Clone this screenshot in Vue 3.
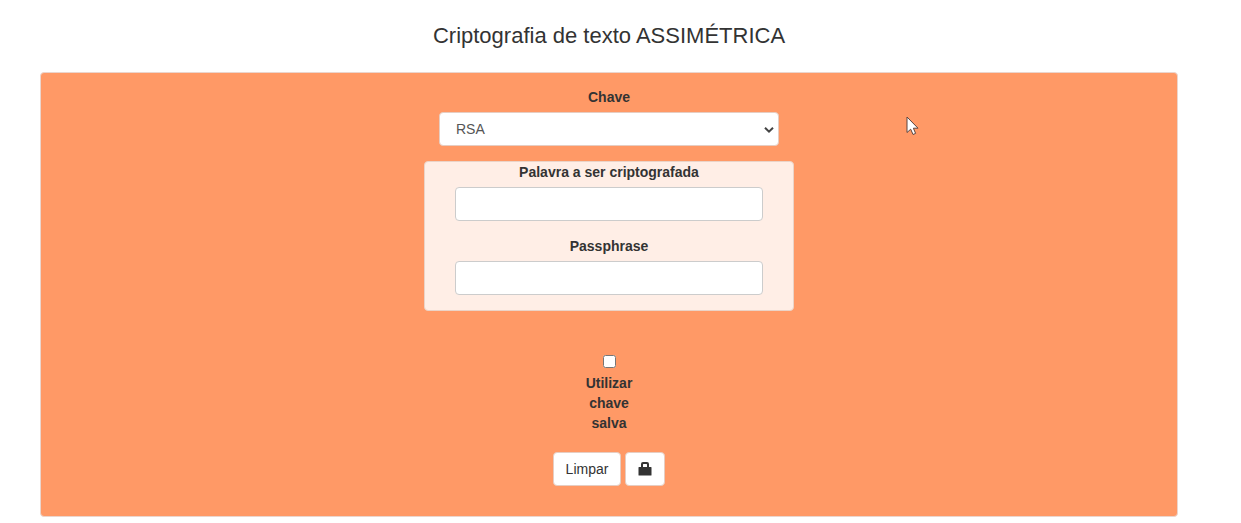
<script setup>
import { ref } from 'vue'

const keyType = ref('RSA')
const word = ref('')
const passphrase = ref('')
const useSaved = ref(false)

function clearForm() {
  word.value = ''
  passphrase.value = ''
  useSaved.value = false
}
</script>

<template>
  <main class="page">
    <h1 class="title">Criptografia de texto ASSIMÉTRICA</h1>
    <form class="panel" @submit.prevent>
      <div class="group key-group">
        <label for="key">Chave</label>
        <div class="select-wrap">
          <select id="key" v-model="keyType" class="control">
            <option>RSA</option>
          </select>
          <svg class="chevron" viewBox="0 0 10 8" aria-hidden="true">
            <path d="M1 1.7 L5 5.7 L9 1.7" fill="none" stroke="#444" stroke-width="2" />
          </svg>
        </div>
      </div>

      <div class="inset">
        <div class="group">
          <label for="word">Palavra a ser criptografada</label>
          <input id="word" v-model="word" class="control" type="text" />
        </div>
        <div class="group">
          <label for="pass">Passphrase</label>
          <input id="pass" v-model="passphrase" class="control" type="password" />
        </div>
      </div>

      <div class="saved">
        <input id="saved" v-model="useSaved" type="checkbox" />
        <label for="saved">Utilizar chave salva</label>
      </div>

      <div class="actions">
        <button class="btn" type="button" @click="clearForm">Limpar</button>
        <button class="btn" type="submit" aria-label="Criptografar">
          <svg class="lock" viewBox="0 0 14 14" aria-hidden="true">
            <path
              fill="#333"
              fill-rule="evenodd"
              d="M1 5 H3 V2 Q3 0 5 0 H9 Q11 0 11 2 V5 H13 Q13.5 5 13.5 5.5 V13 Q13.500 13.500 13 13.500 H1 Q0.500 13.500 0.500 13 V5.500 Q0.500 5 1 5 Z M5 5 H9 V2.500 Q9 2 8.500 2 H5.500 Q5 2 5 2.500 Z"
            />
          </svg>
        </button>
      </div>

      <svg class="pointer" viewBox="0 0 13 20" aria-hidden="true">
        <path
          d="M1 1 V16.500 L4.700 13.200 L7 18.500 L9.600 17.400 L7.400 12.200 H12 Z"
          fill="#fff"
          stroke="#5a4540"
        />
      </svg>
    </form>
  </main>
</template>

<style>
body {
  background: #fff;
}
</style>

<style scoped>
* {
  box-sizing: border-box;
}

.page {
  padding: 24px 63px 6px 40px;
  color: #333;
  font: 14px/20px "Liberation Sans", Arial, sans-serif;
}

.title {
  margin: 0 0 24px;
  font-size: 22px;
  font-weight: 400;
  line-height: 24px;
  text-align: center;
}

.panel {
  position: relative;
  display: flex;
  flex-direction: column;
  align-items: center;
  padding: 14px 15px 30px;
  background: #ff9966;
  border: 1px solid #ebd5cd;
  border-radius: 4px;
}

.group {
  display: flex;
  flex-direction: column;
  gap: 5px;
  width: 100%;
  margin-bottom: 15px;
  text-align: center;
}

.key-group {
  max-width: 340px;
}

label {
  font-weight: 700;
}

.control {
  display: block;
  width: 100%;
  height: 34px;
  padding: 6px 12px;
  color: #555;
  font: inherit;
  background: #fff;
  border: 1px solid #ccc;
  border-radius: 4px;
}

.select-wrap {
  position: relative;
}

select.control {
  padding: 6px 16px;
  border-color: #e6cdc2;
  appearance: none;
}

.chevron {
  position: absolute;
  top: 14px;
  right: 5px;
  width: 10px;
  height: 8px;
  pointer-events: none;
}

.inset {
  width: 100%;
  max-width: 370px;
  padding: 0 30px;
  background: #ffeee6;
  border: 1px solid #ebd3c7;
  border-radius: 4px;
}

.saved {
  display: flex;
  flex-direction: column;
  align-items: center;
  gap: 5px;
  width: 60px;
  margin: 44px 0 19px;
  text-align: center;
}

.saved input {
  width: 13px;
  height: 13px;
  margin: 0;
}

.actions {
  display: flex;
  gap: 4px;
}

.btn {
  height: 34px;
  padding: 6px 12px;
  color: #333;
  font: inherit;
  background: #fff;
  border: 1px solid #e6cdc2;
  border-radius: 4px;
}

.lock {
  display: block;
  width: 14px;
  height: 14px;
}

.pointer {
  position: absolute;
  top: 43px;
  left: 865px;
  width: 13px;
  height: 20px;
}
</style>
